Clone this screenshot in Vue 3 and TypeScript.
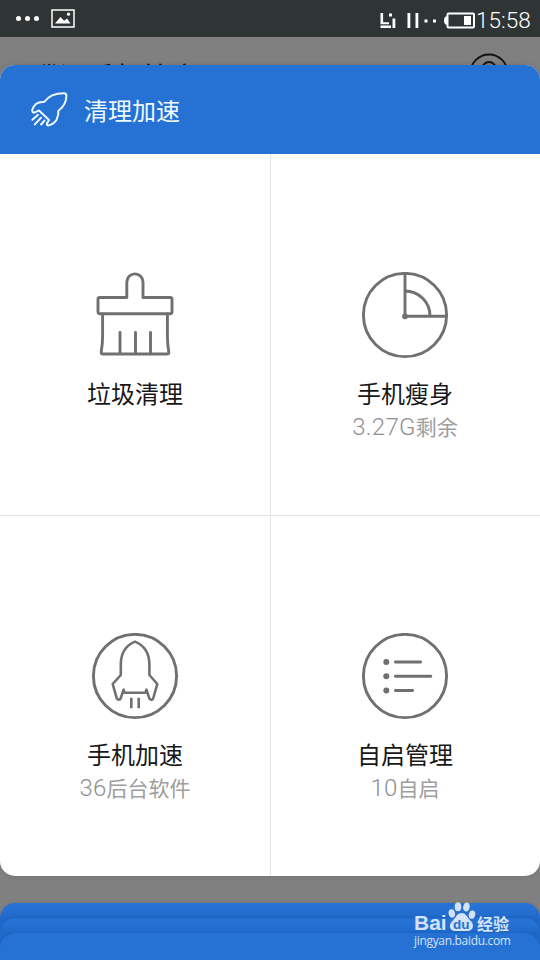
<script setup lang="ts">
interface Tile {
  icon: 'brush' | 'pie' | 'rocket' | 'list'
  label: string
  value?: string
  unit?: string
}

const tiles: Tile[] = [
  { icon: 'brush', label: '垃圾清理' },
  { icon: 'pie', label: '手机瘦身', value: '3.27G', unit: '剩余' },
  { icon: 'rocket', label: '手机加速', value: '36', unit: '后台软件' },
  { icon: 'list', label: '自启管理', value: '10', unit: '自启' },
]
</script>

<template>
  <div class="screen">
    <header class="status">
      <div class="status-left">
        <i class="dot" /><i class="dot" /><i class="dot" />
        <svg class="photo" width="24" height="19" viewBox="0 0 24 19">
          <rect x="1" y="1" width="22" height="17" fill="none" stroke="#fff" stroke-width="1.5" />
          <path d="M4 14.5 9.5 8l3.6 3.8 3-2.4 3.4 5.1z" fill="#fff" />
          <circle cx="17.5" cy="5.2" r="1.6" fill="#fff" />
        </svg>
      </div>
      <div class="status-right">
        <svg width="95" height="20" viewBox="0 0 95 20" fill="#fff">
          <path d="M-.5 3h2.6v9.2H8v2H-.5zM-.5 15.4H10V18H-.5zM8 3.5h3v3H8zM11.5 8.5h2.8V18h-2.8zM26.5 3h2.8v15h-2.8zM34.5 3h2.8v15h-2.8zM43.5 9.5h3v3h-3zM52 9.5h3v3h-3z" />
          <rect x="66.5" y="3.5" width="26.5" height="14" rx="1" fill="none" stroke="#fff" stroke-width="2" />
          <path d="M66 6.5h-1.5q-1.5 1-1.5 4t1.5 4H66zM83 6h7v9h-7z" />
        </svg>
        <span class="clock">15:58</span>
      </div>
    </header>

    <div class="behind">
      <span class="app-name">腾讯手机管家</span>
      <svg class="avatar" width="40" height="40" viewBox="0 0 40 40" fill="none" stroke="#111" stroke-width="1.8">
        <circle cx="20" cy="20" r="18.5" />
        <circle cx="20" cy="16" r="7" />
      </svg>
    </div>

    <main class="card">
      <div class="card-head">
        <svg width="38" height="36" viewBox="0 0 38 36" fill="none" stroke="#edfaff" stroke-width="2" stroke-linecap="round" stroke-linejoin="round">
          <path d="M14.2 10C18 4.5 24 1.2 34 1.2q2.4 0 2.4 2.6C36.4 11 33.5 15 28.4 18.8q.2 4.6-1.7 8.6c-1.6 2.8-4.5 5.2-8.4 6q-2.2-.3-1.2-2.2L19 27.9 9 18.4l-4.6 2.2q-2.2.2-2.2-2.6C4 12 8 9.4 14.2 10z" />
          <path d="m8 22.8-5.6 5M11 25.8l-6.2 6.6M14.5 28.5l-3.4 4" />
        </svg>
        <h1>清理加速</h1>
      </div>
      <section class="grid">
        <article v-for="tile in tiles" :key="tile.label" class="tile">
          <svg class="icon" width="88" height="88" viewBox="0 0 88 88" fill="none" stroke="#707070" stroke-width="2.9" stroke-linecap="round" stroke-linejoin="round">
            <g v-if="tile.icon === 'brush'">
              <path d="M35.8 25.5V10a8.1 8.1 0 0 1 16.2 0v15.5h27.2q1.8 0 1.8 1.8v12.4q0 2-1.8 2H8.8q-1.8 0-1.8-2V27.3q0-1.8 1.8-1.8z" />
              <path d="M11.6 42v22q0 8-1.4 16.2 0 1.8 1.8 1.8h64q1.8 0 1.8-1.8Q76.4 72 76.4 64V42M29 60.5V81M44.5 60.5V81M59.5 60.5V81" />
            </g>
            <g v-else-if="tile.icon === 'pie'">
              <circle cx="44" cy="43" r="41.6" />
              <path d="M44 2v42.3h41M44 19a25 25 0 0 1 25 25" />
              <circle cx="44" cy="44.3" r="2.9" fill="#707070" stroke="none" />
            </g>
            <g v-else-if="tile.icon === 'rocket'">
              <circle cx="44" cy="43" r="41.6" />
              <path d="M29.8 42V31C30 21 34.5 12.5 44 8.6 53.5 12.5 58.2 21 58.4 31v11l7.9 9-4.1 14.5q-.6 1.4-2 1.2t-1.8-1.2l-3-8.8-.9 3H33.5l-.9-3-3 8.8q-.4 1.2-1.8 1.2t-2-1.2L21.7 51z" stroke-width="2.6" />
              <path d="M40.3 64.8v10.4M47.7 64.8v10.4" stroke-width="2.6" stroke-linecap="butt" />
            </g>
            <g v-else>
              <circle cx="44" cy="43" r="41.6" />
              <path d="M34.4 29h25.2M34.4 43.3h35.4M34.4 57.5h17.2" />
              <g fill="#707070" stroke="none">
                <circle cx="25.3" cy="29" r="3" /><circle cx="25.3" cy="43.3" r="3" /><circle cx="25.3" cy="57.5" r="3" />
              </g>
            </g>
          </svg>
          <h2>{{ tile.label }}</h2>
          <p v-if="tile.value"><span class="value">{{ tile.value }}</span>{{ tile.unit }}</p>
        </article>
      </section>
    </main>

    <footer class="stack">
      <div class="sheet"><div class="sheet"><div class="sheet" /></div></div>
      <div class="watermark">
        <div class="brand">
          <span class="bai">Bai</span>
          <svg width="28" height="30" viewBox="0 0 28 30">
            <g fill="#d3e2f7">
              <ellipse cx="3.8" cy="11.5" rx="3.2" ry="4.2" transform="rotate(-12 3.5 11.5)" />
              <ellipse cx="10" cy="4.8" rx="3.3" ry="4.5" />
              <ellipse cx="18.4" cy="5" rx="3.2" ry="4.5" transform="rotate(12 18.4 5)" />
              <ellipse cx="24" cy="12.6" rx="3.2" ry="4.2" transform="rotate(15 24 12.6)" />
              <path d="M13.5 11c5 0 6 5 9.5 8.2 4 4 1.5 9.8-3.5 9.8H7c-5 0-7-5.5-3-9.5 3.4-3.2 5-8.5 9.5-8.5z" />
            </g>
            <text x="13.2" y="26.5" text-anchor="middle" class="du">du</text>
          </svg>
          <span class="exp">经验</span>
        </div>
        <div class="url">jingyan.baidu.com</div>
      </div>
    </footer>
  </div>
</template>

<style>
body {
  margin: 0;
}
</style>

<style scoped>
.screen {
  width: 540px;
  height: 960px;
  display: flex;
  flex-direction: column;
  overflow: hidden;
  background: #808080;
  font-family: "Noto Sans CJK SC", sans-serif;
}
.status {
  flex: none;
  height: 37px;
  box-sizing: border-box;
  padding: 0 9px 0 16px;
  display: flex;
  align-items: center;
  justify-content: space-between;
  background: #2f3535;
  color: #fff;
}
.status-left {
  display: flex;
  align-items: center;
  gap: 4px;
}
.dot {
  width: 5px;
  height: 5px;
  border-radius: 50%;
  background: #fff;
}
.photo {
  margin-left: 8px;
}
.status-right {
  display: flex;
  align-items: center;
  padding-top: 3px;
}
.status-right svg {
  overflow: visible;
}
.clock {
  font: 300 22.5px/30px Roboto, sans-serif;
  width: 55px;
  white-space: nowrap;
}
.behind {
  flex: none;
  height: 28px;
  box-sizing: border-box;
  padding: 16px 31px 0 31px;
  display: flex;
  align-items: flex-start;
  justify-content: space-between;
  overflow: hidden;
  color: #111;
}
.app-name {
  margin-top: 1.5px;
  font-size: 28px;
  line-height: 42px;
}
.card {
  flex: none;
  height: 811px;
  display: flex;
  flex-direction: column;
  border-radius: 15px;
  overflow: hidden;
  background: #fff;
  box-shadow: 0 0 6px rgba(0, 0, 0, 0.12);
}
.card-head {
  flex: none;
  height: 89px;
  box-sizing: border-box;
  padding: 0 30px;
  display: flex;
  align-items: center;
  gap: 16px;
  background: #2671d4;
}
h1 {
  margin: 0;
  color: #edfaff;
  font-size: 24px;
  font-weight: 400;
  line-height: 36px;
}
.grid {
  flex: 1;
  display: grid;
  grid-template-columns: 1fr 1fr;
  grid-template-rows: 1fr 1fr;
}
.tile {
  box-sizing: border-box;
  padding-top: 118px;
  display: flex;
  flex-direction: column;
  align-items: center;
}
.tile:nth-child(even) {
  border-left: 1px solid #e4e4e4;
  padding-right: 1px;
}
.tile:nth-child(n + 3) {
  border-top: 1px solid #e4e4e4;
  padding-top: 117px;
}
.icon {
  flex: none;
}
h2 {
  margin: 15px 0 0;
  font-size: 24px;
  font-weight: 400;
  line-height: 36px;
  color: #181818;
}
p {
  margin: 0;
  font-size: 21px;
  line-height: 31px;
  color: #9e9e9e;
  white-space: nowrap;
}
.value {
  font-family: Roboto, sans-serif;
  font-weight: 300;
  font-size: 24px;
  letter-spacing: 0.3px;
  color: #909090;
}
.stack {
  flex: 1;
  position: relative;
  padding-top: 27px;
}
.sheet {
  height: 57px;
  box-sizing: border-box;
  padding-top: 15px;
  border-radius: 15px 15px 0 0;
  background: linear-gradient(#2671d4 6px, #2069c9 15px);
  box-shadow: 0 0 3px rgba(0, 30, 90, 0.2);
}
.sheet .sheet {
  height: 42px;
}
.sheet .sheet .sheet {
  height: 27px;
  background: #2671d4;
}
.watermark {
  position: absolute;
  left: 414px;
  top: 26px;
  color: #d3e2f7;
}
.brand {
  height: 30px;
  display: flex;
  align-items: flex-end;
}
.bai {
  width: 34px;
  font: 700 21px/22px "Liberation Sans", sans-serif;
  margin-bottom: -2px;
}
.exp {
  font-size: 16px;
  font-weight: 700;
  line-height: 18px;
  margin-left: 1px;
}
.du {
  font: 700 13.5px "Liberation Sans", sans-serif;
  fill: #2671d4;
}
.url {
  padding-top: 1px;
  font: 400 12px/16px "Open Sans", sans-serif;
  letter-spacing: -0.32px;
}
</style>
